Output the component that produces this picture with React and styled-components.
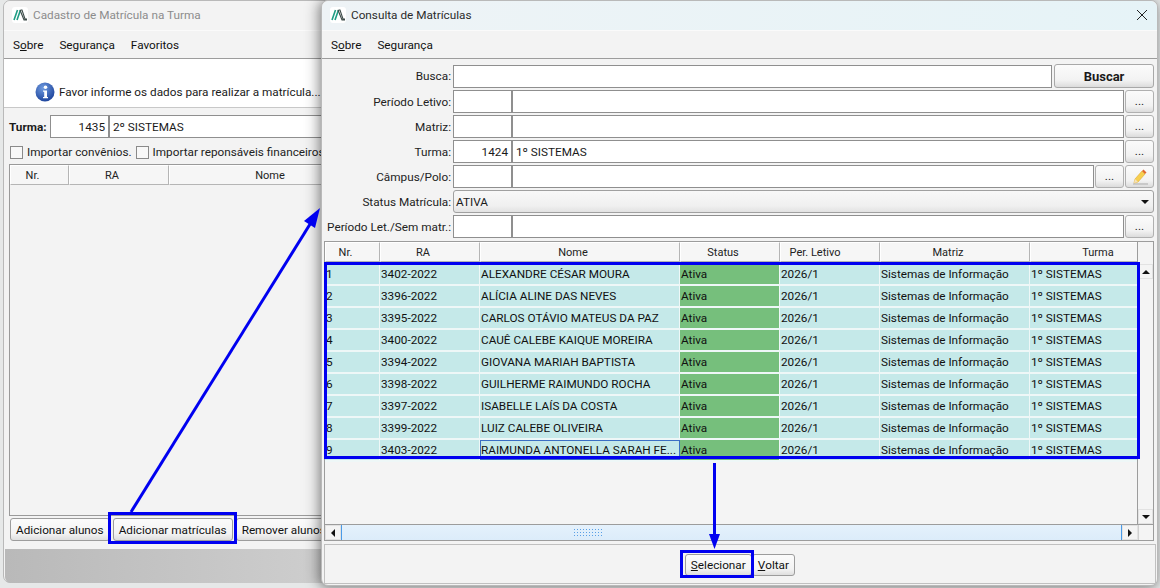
import styled, { createGlobalStyle } from "styled-components";

const GlobalStyle = createGlobalStyle`
  html, body {
    margin: 0;
    padding: 0;
    width: 1160px;
    height: 588px;
    overflow: hidden;
    background: #e4e6e6;
  }
  * { box-sizing: border-box; }
`;

const matriculas = [
  ["1", "3402-2022", "ALEXANDRE CÉSAR MOURA"],
  ["2", "3396-2022", "ALÍCIA ALINE DAS NEVES"],
  ["3", "3395-2022", "CARLOS OTÁVIO MATEUS DA PAZ"],
  ["4", "3400-2022", "CAUÊ CALEBE KAIQUE MOREIRA"],
  ["5", "3394-2022", "GIOVANA MARIAH BAPTISTA"],
  ["6", "3398-2022", "GUILHERME RAIMUNDO ROCHA"],
  ["7", "3397-2022", "ISABELLE LAÍS DA COSTA"],
  ["8", "3399-2022", "LUIZ CALEBE OLIVEIRA"],
  ["9", "3403-2022", "RAIMUNDA ANTONELLA SARAH FE..."],
];

const colunas = "55px 100px 200px 100px 100px 150px 150px";

function Logo() {
  return (
    <LogoBox>
      <svg width="14" height="12" viewBox="0 0 14 12">
        <path d="M1 11 L4.5 1 M4 11 L7.5 1" stroke="#1f9d84" strokeWidth="1.6" fill="none" />
        <path d="M7.5 1 L9 1 L12 10 L14 10 M7 1 L11 11 L14 11" stroke="#3c4a48" strokeWidth="1.1" fill="none" />
      </svg>
    </LogoBox>
  );
}

function InfoIcon() {
  return (
    <svg width="20" height="20" viewBox="0 0 20 20">
      <defs>
        <radialGradient id="info" cx="0.4" cy="0.3" r="0.8">
          <stop offset="0" stopColor="#6f9be0" />
          <stop offset="1" stopColor="#143a94" />
        </radialGradient>
      </defs>
      <circle cx="10" cy="10" r="9.5" fill="url(#info)" />
      <circle cx="10.5" cy="5.2" r="1.8" fill="#fff" />
      <path d="M8 8.5 H12 V15 H13 V16.2 H8 V15 H9.2 V9.8 H8 Z" fill="#fff" />
    </svg>
  );
}

function PencilIcon() {
  return (
    <svg width="20" height="20" viewBox="0 0 20 20">
      <path d="M3 17 H18" stroke="#c9c9c9" strokeWidth="2" />
      <path d="M4 16 L5 12 L12 4 L15 7 L8 15 Z" fill="#f7cf4f" stroke="#e0a92f" strokeWidth="0.6" />
      <path d="M12 4 L13.5 2.5 L16.5 5.5 L15 7 Z" fill="#e0692e" />
      <path d="M4 16 L5 12 L8 15 Z" fill="#f3e2bd" />
    </svg>
  );
}

function App() {
  return (
    <Desktop>
      <GlobalStyle />

      <LeftWindow>
        <TitleBar>
          <Logo />
          <TitleText $muted>Cadastro de Matrícula na Turma</TitleText>
        </TitleBar>
        <MenuBar>
          <MenuItem>S<u>o</u>bre</MenuItem>
          <MenuItem>Segurança</MenuItem>
          <MenuItem>Favoritos</MenuItem>
        </MenuBar>
        <InfoPanel>
          <InfoIcon />
          <span>Favor informe os dados para realizar a matrícula...</span>
        </InfoPanel>
        <TurmaRow>
          <strong>Turma:</strong>
          <CodeInput>1435</CodeInput>
          <NameInput>2º SISTEMAS</NameInput>
        </TurmaRow>
        <CheckRow>
          <CheckBox />
          <span>Importar convênios.</span>
          <CheckBox />
          <span>Importar reponsáveis financeiros</span>
        </CheckRow>
        <LeftGrid>
          <HeaderRow $columns="59px 100px 216px">
            <HeaderCell>Nr.</HeaderCell>
            <HeaderCell>RA</HeaderCell>
            <HeaderCell>Nome</HeaderCell>
          </HeaderRow>
        </LeftGrid>
        <LeftButtons>
          <PushButton>Adicionar alunos</PushButton>
          <PushButton>Adicionar matrículas</PushButton>
          <PushButton>Remover alunos</PushButton>
        </LeftButtons>
        <GreyBar />
      </LeftWindow>

      <RightWindow>
        <TitleBar $active>
          <Logo />
          <TitleText>Consulta de Matrículas</TitleText>
          <CloseButton>
            <svg width="12" height="12" viewBox="0 0 12 12">
              <path d="M1 1 L11 11 M11 1 L1 11" stroke="#222" strokeWidth="1" fill="none" />
            </svg>
          </CloseButton>
        </TitleBar>
        <MenuBar>
          <MenuItem>S<u>o</u>bre</MenuItem>
          <MenuItem>Segurança</MenuItem>
        </MenuBar>

        <SearchForm>
          <FormRow>
            <FieldLabel>Busca:</FieldLabel>
            <NameInput>&nbsp;</NameInput>
            <SearchButton>Buscar</SearchButton>
          </FormRow>
          <FormRow>
            <FieldLabel>Período Letivo:</FieldLabel>
            <CodeInput />
            <NameInput />
            <DotsButton>...</DotsButton>
          </FormRow>
          <FormRow>
            <FieldLabel>Matriz:</FieldLabel>
            <CodeInput />
            <NameInput />
            <DotsButton>...</DotsButton>
          </FormRow>
          <FormRow>
            <FieldLabel>Turma:</FieldLabel>
            <CodeInput>1424</CodeInput>
            <NameInput>1º SISTEMAS</NameInput>
            <DotsButton>...</DotsButton>
          </FormRow>
          <FormRow>
            <FieldLabel>Câmpus/Polo:</FieldLabel>
            <CodeInput />
            <NameInput />
            <DotsButton>...</DotsButton>
            <DotsButton><PencilIcon /></DotsButton>
          </FormRow>
          <FormRow>
            <FieldLabel>Status Matrícula:</FieldLabel>
            <SelectBox>
              <span>ATIVA</span>
              <Caret />
            </SelectBox>
          </FormRow>
          <FormRow>
            <FieldLabel>Período Let./Sem matr.:</FieldLabel>
            <CodeInput />
            <NameInput />
            <DotsButton>...</DotsButton>
          </FormRow>
        </SearchForm>

        <GridFrame>
          <GridMain>
            <GridContent>
              <HeaderRow $columns={colunas}>
                <HeaderCell>Nr.</HeaderCell>
                <HeaderCell>RA</HeaderCell>
                <HeaderCell>Nome</HeaderCell>
                <HeaderCell>Status</HeaderCell>
                <HeaderCell $shift={30}>Per. Letivo</HeaderCell>
                <HeaderCell>Matriz</HeaderCell>
                <HeaderCell>Turma</HeaderCell>
              </HeaderRow>
              <Rows>
                {matriculas.map(([nr, ra, nome], i) => (
                  <DataRow key={nr}>
                    <DataCell>{nr}</DataCell>
                    <DataCell>{ra}</DataCell>
                    <DataCell $focused={i === matriculas.length - 1}>{nome}</DataCell>
                    <DataCell $status>Ativa</DataCell>
                    <DataCell>2026/1</DataCell>
                    <DataCell>Sistemas de Informação</DataCell>
                    <DataCell>1º SISTEMAS</DataCell>
                  </DataRow>
                ))}
              </Rows>
            </GridContent>
            <VScroll>
              <ScrollButton><ArrowUp /></ScrollButton>
              <ScrollButton><ArrowDown /></ScrollButton>
            </VScroll>
          </GridMain>
          <HScroll>
            <ScrollButton $wide><ArrowLeft /></ScrollButton>
            <HTrack><Grip /></HTrack>
            <ScrollButton $wide><ArrowRight /></ScrollButton>
            <ScrollCorner />
          </HScroll>
        </GridFrame>

        <FooterBar>
          <PushButton $tall><u>S</u>elecionar</PushButton>
          <PushButton $tall><u>V</u>oltar</PushButton>
        </FooterBar>
      </RightWindow>

      <Highlight $x={108} $y={512} $w={129} $h={32} />
      <Highlight $x={324} $y={262} $w={816} $h={197} />
      <Highlight $x={680} $y={550} $w={74} $h={28} />
      <ArrowLayer width="1160" height="588" viewBox="0 0 1160 588">
        <path d="M131 512 L312 221" stroke="#0000f0" strokeWidth="3" fill="none" />
        <path d="M320 208 L304 221 L315 228 Z" fill="#0000f0" />
        <path d="M714.5 463 L714.5 540" stroke="#0000f0" strokeWidth="3" fill="none" />
        <path d="M714.5 549 L709 534 L720 534 Z" fill="#0000f0" />
      </ArrowLayer>
    </Desktop>
  );
}

const Desktop = styled.div`
  position: relative;
  width: 1160px;
  height: 588px;
  overflow: hidden;
  background: #e6e8e8;
  color: #1a1a1a;
  font-family: "Roboto", "Noto Sans", sans-serif;
  font-size: 11.75px;
`;

const WindowFrame = styled.div`
  position: absolute;
  top: 0;
  display: flex;
  flex-direction: column;
  background: #f3f3f3;
  border-radius: 7px;
  border: 1px solid #b9b9b9;
`;

const LeftWindow = styled(WindowFrame)`
  left: 3px;
  width: 340px;
  height: 583px;
`;

const RightWindow = styled(WindowFrame)`
  left: 321px;
  width: 837px;
  height: 586px;
  box-shadow: -4px 0 14px rgba(0, 0, 0, 0.28), 0 2px 10px rgba(0, 0, 0, 0.25);
`;

const TitleBar = styled.div`
  flex: none;
  height: 30px;
  padding: 0 0 2px 8px;
  display: flex;
  align-items: center;
  gap: 3px;
  background: ${(p) => (p.$active ? "linear-gradient(90deg, #eef3f6, #e6f3f7)" : "#f3f3f3")};
  border-radius: 7px 7px 0 0;
  border-bottom: 1px solid #fafafa;
`;

const LogoBox = styled.span`
  width: 16px;
  height: 16px;
  display: flex;
  align-items: center;
  justify-content: center;
  background: #fff;
  border-radius: 3px;
`;

const TitleText = styled.span`
  color: ${(p) => (p.$muted ? "#8c8c8c" : "#2b2b2b")};
  padding-left: 2px;
`;

const CloseButton = styled.span`
  margin-left: auto;
  margin-right: 9px;
  display: flex;
`;

const MenuBar = styled.div`
  flex: none;
  height: 28px;
  display: flex;
  align-items: center;
  gap: 16px;
  padding-left: 9px;
  border-bottom: 1px solid #9c9c9c;
`;

const MenuItem = styled.span`
  color: #111;
`;

const InfoPanel = styled.div`
  flex: none;
  height: 49px;
  padding: 18px 0 0 31px;
  display: flex;
  align-items: center;
  gap: 4px;
  background: #fff;
  border-bottom: 1px solid #c8c8c8;
`;

const TurmaRow = styled.div`
  flex: none;
  height: 23px;
  margin-top: 7px;
  padding-left: 5px;
  display: flex;
  align-items: stretch;
  strong {
    display: flex;
    align-items: center;
    width: 41px;
  }
`;

const InputBox = styled.div`
  height: 23px;
  line-height: 23px;
  background: #fff;
  border: 1px solid #8f8f8f;
  padding: 0 3px;
  white-space: nowrap;
  overflow: hidden;
`;

const CodeInput = styled(InputBox)`
  flex: none;
  width: 59px;
  text-align: right;
`;

const NameInput = styled(InputBox)`
  flex: 1;
  min-width: 0;
`;

const CheckRow = styled.div`
  flex: none;
  height: 18px;
  margin-top: 5px;
  padding-left: 6px;
  display: flex;
  align-items: center;
  gap: 4px;
  white-space: nowrap;
  color: #222;
`;

const CheckBox = styled.span`
  flex: none;
  width: 13px;
  height: 13px;
  background: #f8f8f8;
  border: 1px solid #8a8a8a;
`;

const LeftGrid = styled.div`
  flex: none;
  height: 352px;
  margin: 3px 0 0 5px;
  border: 1px solid #9a9a9a;
  border-right: none;
`;

const HeaderRow = styled.div`
  display: grid;
  grid-template-columns: ${(p) => p.$columns};
  height: 20px;
`;

const HeaderCell = styled.div`
  display: flex;
  align-items: center;
  justify-content: center;
  padding-right: ${(p) => p.$shift || 14}px;
  font-size: 11px;
  white-space: nowrap;
  color: #222;
  background: #f6f6f6;
  border: 1px solid #b5b5b5;
  border-left-color: #fff;
  border-top-color: #fff;
`;

const LeftButtons = styled.div`
  flex: none;
  margin: 2px 0 0 6px;
  display: flex;
  gap: 3px;
  white-space: nowrap;
`;

const PushButton = styled.div`
  flex: none;
  height: ${(p) => (p.$tall ? 22 : 23)}px;
  padding: 0 5px;
  display: flex;
  align-items: center;
  border: 1px solid #9c9c9c;
  border-radius: 3px;
  background: linear-gradient(#fbfbfb, #f3f3f3 70%, #dedede);
  color: #111;
`;

const GreyBar = styled.div`
  flex: none;
  height: 34px;
  margin: 8px 1px 0 1px;
  background: linear-gradient(90deg, #b9b9b9, #cfcfcf);
  border-radius: 0 0 6px 6px;
`;

const SearchForm = styled.div`
  flex: none;
  padding: 5px 3px 0 0;
  display: flex;
  flex-direction: column;
  gap: 2px;
`;

const FormRow = styled.div`
  display: flex;
  align-items: center;
  height: 23px;
  &:first-child {
    height: 24px;
  }
`;

const FieldLabel = styled.span`
  flex: none;
  width: 131px;
  padding-right: 2px;
  text-align: right;
  white-space: nowrap;
  color: #222;
`;

const SearchButton = styled.div`
  flex: none;
  width: 100px;
  height: 24px;
  margin-left: 2px;
  display: flex;
  align-items: center;
  justify-content: center;
  font-weight: 700;
  font-size: 13px;
  border: 1px solid #a8a8a8;
  border-radius: 3px;
  background: linear-gradient(#fbfbfb, #f2f2f2 70%, #dcdcdc);
`;

const DotsButton = styled.div`
  flex: none;
  width: 29px;
  height: 23px;
  margin-left: 1px;
  display: flex;
  align-items: center;
  justify-content: center;
  border: 1px solid #b0b0b0;
  border-radius: 3px;
  background: linear-gradient(#fbfbfb, #f2f2f2 70%, #dcdcdc);
  line-height: 1;
`;

const SelectBox = styled.div`
  flex: 1;
  height: 23px;
  padding: 0 4px 0 2px;
  display: flex;
  align-items: center;
  justify-content: space-between;
  border: 1px solid #a0a0a0;
  border-radius: 3px;
  background: linear-gradient(#f8f8f8, #f0f0f0 70%, #e2e2e2);
`;

const Caret = styled.span`
  width: 0;
  height: 0;
  border-left: 4px solid transparent;
  border-right: 4px solid transparent;
  border-top: 4px solid #111;
`;

const GridFrame = styled.div`
  flex: none;
  height: 300px;
  margin: 3px 3px 0 2px;
  display: flex;
  flex-direction: column;
  border: 1px solid #9c9c9c;
  background: #f4f4f4;
`;

const GridMain = styled.div`
  flex: 1;
  min-height: 0;
  display: flex;
`;

const GridContent = styled.div`
  flex: 1;
  min-width: 0;
  overflow: hidden;
  border-right: 1px solid #9c9c9c;
  border-bottom: 1px solid #9c9c9c;
`;

const Rows = styled.div`
  margin-top: 2px;
`;

const DataRow = styled.div`
  display: grid;
  grid-template-columns: ${colunas};
  height: 22px;
  border-bottom: 2px solid #eef7f7;
`;

const DataCell = styled.div`
  display: flex;
  align-items: center;
  padding-left: 1px;
  white-space: nowrap;
  overflow: hidden;
  color: #111;
  background: ${(p) => (p.$status ? "#76bf7c" : "#c5e9e9")};
  border-right: 1px solid #eef7f7;
  ${(p) => p.$focused && "outline: 1px solid #3b6fc4; outline-offset: -1px;"}
`;

const VScroll = styled.div`
  flex: none;
  width: 15px;
  display: flex;
  flex-direction: column;
  justify-content: space-between;
  padding-top: 22px;
  border-bottom: 1px solid #9c9c9c;
`;

const ScrollButton = styled.div`
  flex: none;
  width: ${(p) => (p.$wide ? 16 : 15)}px;
  height: 15px;
  display: flex;
  align-items: center;
  justify-content: center;
  background: #f4f4f4;
  border: 1px solid #e2e2e2;
`;

const ArrowUp = styled.span`
  border-left: 4px solid transparent;
  border-right: 4px solid transparent;
  border-bottom: 4px solid #111;
`;

const ArrowDown = styled.span`
  border-left: 4px solid transparent;
  border-right: 4px solid transparent;
  border-top: 4px solid #111;
`;

const ArrowLeft = styled.span`
  border-top: 4px solid transparent;
  border-bottom: 4px solid transparent;
  border-right: 4px solid #111;
`;

const ArrowRight = styled.span`
  border-top: 4px solid transparent;
  border-bottom: 4px solid transparent;
  border-left: 4px solid #111;
`;

const HScroll = styled.div`
  flex: none;
  height: 15px;
  display: flex;
`;

const HTrack = styled.div`
  flex: 1;
  display: flex;
  align-items: center;
  padding-left: 231px;
  background: linear-gradient(#e4f1fc, #dcecfa);
  border-left: 1px solid #4a9be8;
  border-right: 1px solid #4a9be8;
`;

const Grip = styled.span`
  width: 30px;
  height: 10px;
  background-image: radial-gradient(#5aa0e6 1px, transparent 1px);
  background-size: 3px 3px;
`;

const ScrollCorner = styled.div`
  flex: none;
  width: 15px;
  border-left: 1px solid #d0d0d0;
`;

const FooterBar = styled.div`
  flex: none;
  height: 40px;
  margin: 3px 1px 0 2px;
  padding: 9px 360px 0 0;
  display: flex;
  justify-content: flex-end;
  border: 1px solid #c0c0c0;
`;

const Highlight = styled.div.attrs((p) => ({
  style: { left: p.$x, top: p.$y, width: p.$w, height: p.$h },
}))`
  position: absolute;
  border: 3px solid #0000f0;
  pointer-events: none;
`;

const ArrowLayer = styled.svg`
  position: absolute;
  inset: 0;
  pointer-events: none;
`;

export default App;
